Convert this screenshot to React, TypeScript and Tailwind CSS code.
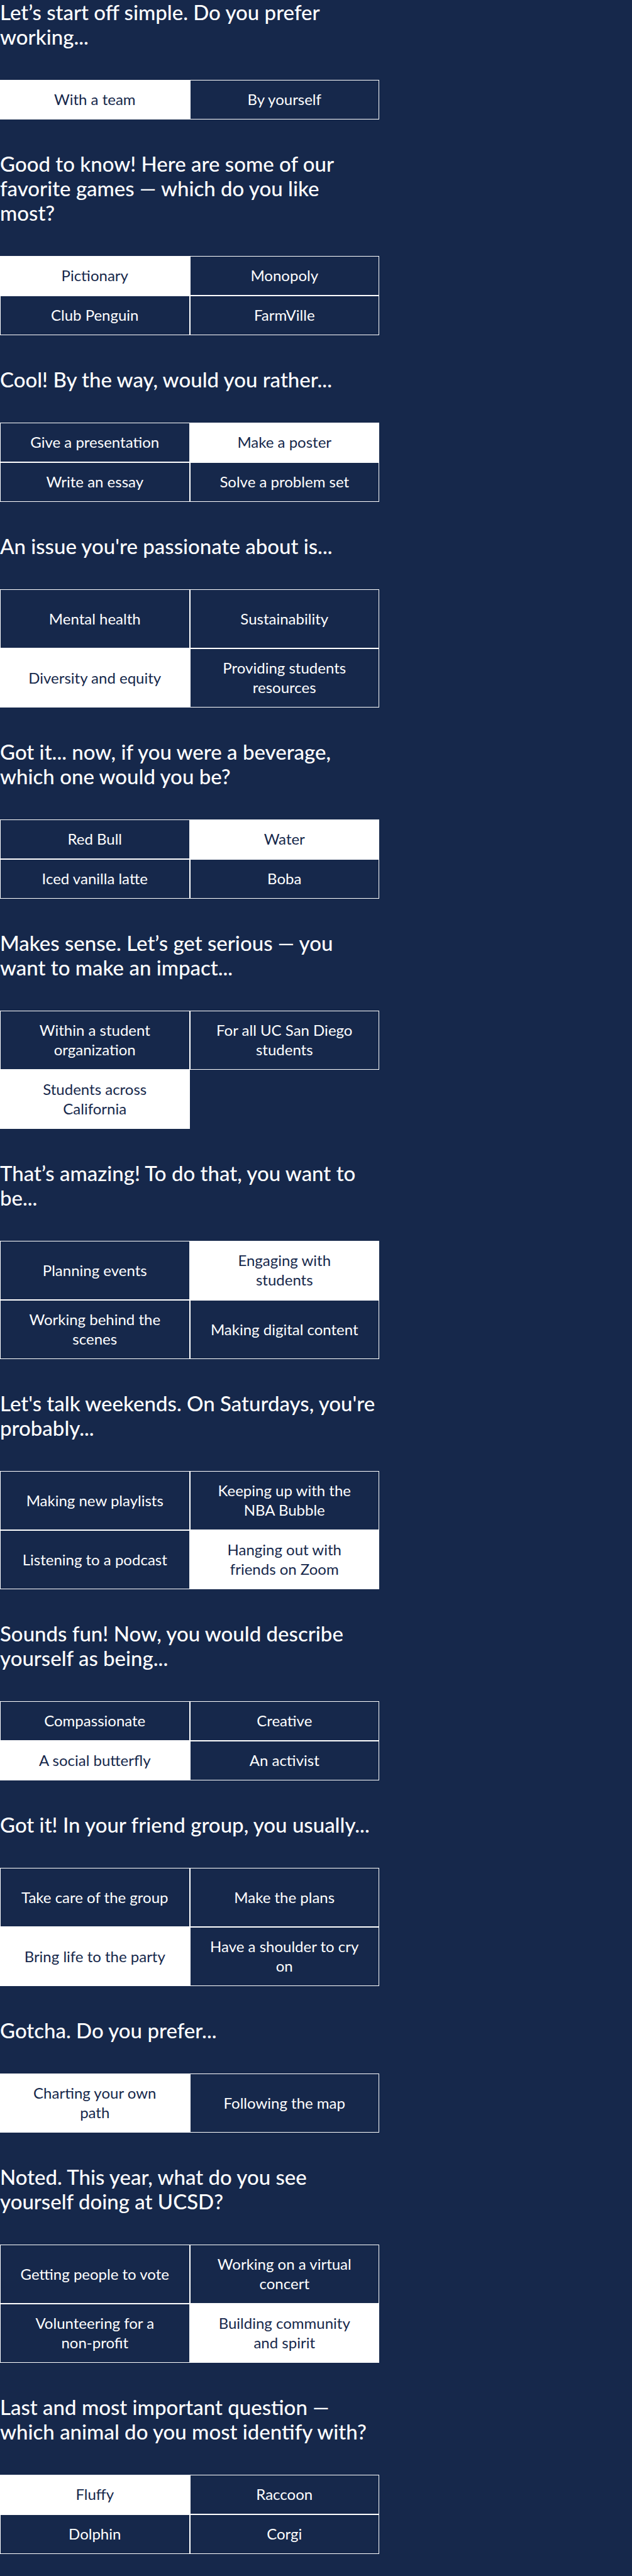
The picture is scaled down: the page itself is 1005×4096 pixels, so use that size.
import { useState } from "react";

type Question = {
  title: string;
  options: string[];
  initial: number;
};

const questions: Question[] = [
  { title: "Let’s start off simple. Do you prefer\nworking...", options: ["With a team", "By yourself"], initial: 0 },
  {
    title: "Good to know! Here are some of our\nfavorite games — which do you like\nmost?",
    options: ["Pictionary", "Monopoly", "Club Penguin", "FarmVille"],
    initial: 0,
  },
  {
    title: "Cool! By the way, would you rather...",
    options: ["Give a presentation", "Make a poster", "Write an essay", "Solve a problem set"],
    initial: 1,
  },
  {
    title: "An issue you're passionate about is...",
    options: ["Mental health", "Sustainability", "Diversity and equity", "Providing students\nresources"],
    initial: 2,
  },
  {
    title: "Got it... now, if you were a beverage,\nwhich one would you be?",
    options: ["Red Bull", "Water", "Iced vanilla latte", "Boba"],
    initial: 1,
  },
  {
    title: "Makes sense. Let’s get serious — you\nwant to make an impact...",
    options: ["Within a student\norganization", "For all UC San Diego\nstudents", "Students across\nCalifornia"],
    initial: 2,
  },
  {
    title: "That’s amazing! To do that, you want to\nbe...",
    options: ["Planning events", "Engaging with\nstudents", "Working behind the\nscenes", "Making digital content"],
    initial: 1,
  },
  {
    title: "Let's talk weekends. On Saturdays, you're\nprobably...",
    options: [
      "Making new playlists",
      "Keeping up with the\nNBA Bubble",
      "Listening to a podcast",
      "Hanging out with\nfriends on Zoom",
    ],
    initial: 3,
  },
  {
    title: "Sounds fun! Now, you would describe\nyourself as being...",
    options: ["Compassionate", "Creative", "A social butterfly", "An activist"],
    initial: 2,
  },
  {
    title: "Got it! In your friend group, you usually...",
    options: ["Take care of the group", "Make the plans", "Bring life to the party", "Have a shoulder to cry\non"],
    initial: 2,
  },
  { title: "Gotcha. Do you prefer...", options: ["Charting your own\npath", "Following the map"], initial: 0 },
  {
    title: "Noted. This year, what do you see\nyourself doing at UCSD?",
    options: [
      "Getting people to vote",
      "Working on a virtual\nconcert",
      "Volunteering for a\nnon-profit",
      "Building community\nand spirit",
    ],
    initial: 3,
  },
  {
    title: "Last and most important question —\nwhich animal do you most identify with?",
    options: ["Fluffy", "Raccoon", "Dolphin", "Corgi"],
    initial: 0,
  },
];

function QuestionBlock({ question, id }: { question: Question; id: string }) {
  const [selected, setSelected] = useState(question.initial);

  return (
    <section aria-labelledby={id}>
      <h2 id={id} className="whitespace-pre-line text-[33px] leading-[39px] font-medium text-white">
        {question.title}
      </h2>
      <div className="mt-[49px] grid auto-rows-fr grid-cols-2">
        {question.options.map((option, index) => (
          <button
            key={option}
            type="button"
            aria-pressed={index === selected}
            onClick={() => setSelected(index)}
            className={
              index === selected
                ? "whitespace-pre-line border border-white bg-white pt-[14px] pb-4 text-center text-2xl leading-[31px] text-[#16284b]"
                : "whitespace-pre-line border border-white pt-[14px] pb-4 text-center text-2xl leading-[31px] text-white"
            }
          >
            {option}
          </button>
        ))}
      </div>
    </section>
  );
}

export default function App() {
  return (
    <main className="min-h-screen bg-[#16284b] font-['Lato',sans-serif]">
      <div className="flex w-3/5 flex-col gap-[51px]">
        {questions.map((question, index) => (
          <QuestionBlock key={question.title} question={question} id={`question-${index + 1}`} />
        ))}
      </div>
    </main>
  );
}
